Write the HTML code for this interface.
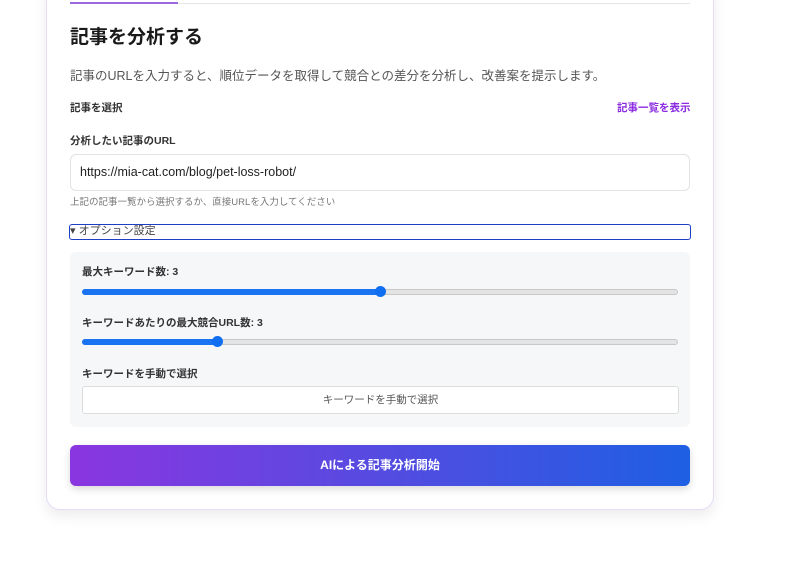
<!DOCTYPE html>
<html><head><meta charset="utf-8"><style>
*{box-sizing:border-box;margin:0;padding:0}
body{width:800px;height:567px;background:#fff;font-family:"Liberation Sans","Noto Sans CJK JP",sans-serif;color:#1f2328;position:relative;overflow:hidden}
.card{position:absolute;left:46px;top:-20px;width:668px;height:530px;background:#fff;border:1px solid #e6dcf7;border-radius:14px;box-shadow:0 6px 14px rgba(0,0,0,.08)}
.a{position:absolute}
.track{position:absolute;height:6px;border-radius:3px;background:#e4e4e4;border:1px solid #c8c8c8}
.fill{position:absolute;height:6px;border-radius:3px;background:#1a73f0}
.thumb{position:absolute;width:11px;height:11px;border-radius:50%;background:#0f6ff0}
</style></head><body>
<div class="card"></div>
<div class="a" style="left:70px;top:3px;width:620px;height:1px;background:#e5e5e5"></div>
<div class="a" style="left:70px;top:2px;width:108px;height:2px;background:#9b6ae0"></div>
<div class="a" style="left:70px;top:22px;font-size:19px;font-weight:bold;color:#1a1a1a">記事を分析する</div>
<div class="a" style="left:70px;top:65px;font-size:12.5px;color:#555">記事のURLを入力すると、順位データを取得して競合との差分を分析し、改善案を提示します。</div>
<div class="a" style="left:70px;top:100px;font-size:10.5px;font-weight:bold;color:#333">記事を選択</div>
<div class="a" style="left:617px;top:100px;font-size:10.5px;font-weight:bold;color:#8a2be2">記事一覧を表示</div>
<div class="a" style="left:70px;top:133px;font-size:10.5px;font-weight:bold;color:#333">分析したい記事のURL</div>
<div class="a" style="left:70px;top:154px;width:620px;height:37px;border:1px solid #e3e3e3;border-radius:6px;font-size:12.5px;padding:10px 0 0 9px;color:#222">https://mia-cat.com/blog/pet-loss-robot/</div>
<div class="a" style="left:70px;top:194px;font-size:9.5px;color:#777">上記の記事一覧から選択するか、直接URLを入力してください</div>
<div class="a" style="left:69px;top:224px;width:622px;height:16px;border:1.5px solid #1f3fc0;border-radius:3px;font-size:11px;color:#444;line-height:13px">▾ オプション設定</div>
<div class="a" style="left:70px;top:252px;width:620px;height:175px;background:#f6f7f9;border-radius:6px"></div>
<div class="a" style="left:82px;top:264px;font-size:10.5px;font-weight:bold;color:#333">最大キーワード数: 3</div>
<div class="track" style="left:82px;top:289px;width:596px"></div>
<div class="fill" style="left:82px;top:289px;width:298px"></div>
<div class="thumb" style="left:375px;top:286px"></div>
<div class="a" style="left:82px;top:315px;font-size:10.5px;font-weight:bold;color:#333">キーワードあたりの最大競合URL数: 3</div>
<div class="track" style="left:82px;top:339px;width:596px"></div>
<div class="fill" style="left:82px;top:339px;width:136px"></div>
<div class="thumb" style="left:212px;top:336px"></div>
<div class="a" style="left:82px;top:366px;font-size:10.5px;font-weight:bold;color:#333">キーワードを手動で選択</div>
<div class="a" style="left:82px;top:386px;width:597px;height:28px;background:#fff;border:1px solid #ddd;border-radius:3px;font-size:10.5px;color:#555;text-align:center;line-height:26px">キーワードを手動で選択</div>
<div class="a" style="left:70px;top:445px;width:620px;height:41px;border-radius:6px;background:linear-gradient(90deg,#8a36e0,#5a49e0 45%,#1e5fe3);box-shadow:0 3px 8px rgba(0,0,0,.15);color:#fff;font-size:12px;font-weight:bold;text-align:center;line-height:41px">AIによる記事分析開始</div>
</body></html>
